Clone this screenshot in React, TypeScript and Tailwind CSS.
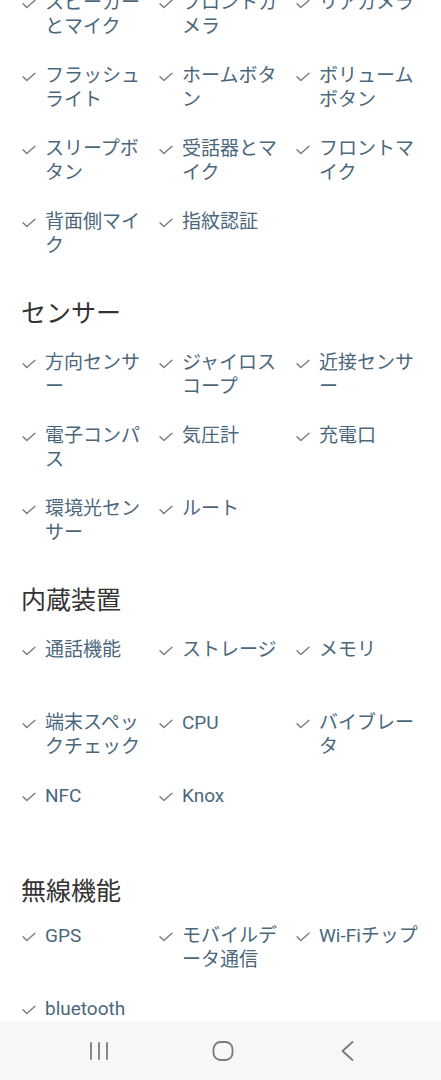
import React from "react";

const Check = () => (
  <svg width="14" height="10" viewBox="0 0 14 10" fill="none" className="mt-[8px] ml-[1px]">
    <path d="M1 4.8 L4.8 8.6 L13 1.2" stroke="#767d84" strokeWidth="1.4" strokeLinecap="round" strokeLinejoin="round" />
  </svg>
);

const Item = ({ t }: { t: string }) => (
  <div className="flex min-h-[48px]">
    <div className="w-[24px] shrink-0">
      <Check />
    </div>
    <div className="w-[104px] text-[19px] leading-[24px] text-[#4b677c] [line-break:anywhere]">{t}</div>
  </div>
);

const Grid = ({ items, className = "" }: { items: string[]; className?: string }) => (
  <div className={"grid grid-cols-[137px_137px_137px] gap-y-[25px] pl-[21px] " + className}>
    {items.map((t) => (
      <Item key={t} t={t} />
    ))}
  </div>
);

const Heading = ({ children, className = "" }: { children: React.ReactNode; className?: string }) => (
  <h2 className={"pl-[21px] text-[25px] leading-[32px] text-[#333333] font-normal " + className}>{children}</h2>
);

export default function App() {
  return (
    <div className="relative h-[1080px] w-[441px] overflow-hidden bg-white font-[Roboto,'Noto_Sans_CJK_JP',sans-serif]">
      <div className="mt-[-9px]">
        <Grid
          items={[
            "スピーカーとマイク",
            "フロントカメラ",
            "リアカメラ",
            "フラッシュライト",
            "ホームボタン",
            "ボリュームボタン",
            "スリープボタン",
            "受話器とマイク",
            "フロントマイク",
            "背面側マイク",
            "指紋認証",
          ]}
        />
        <Heading className="mt-[40px]">センサー</Heading>
        <Grid
          className="mt-[21px]"
          items={["方向センサー", "ジャイロスコープ", "近接センサー", "電子コンパス", "気圧計", "充電口", "環境光センサー", "ルート"]}
        />
        <Heading className="mt-[40px]">内蔵装置</Heading>
        <Grid
          className="mt-[21px]"
          items={["通話機能", "ストレージ", "メモリ", "端末スペックチェック", "CPU", "バイブレータ", "NFC", "Knox"]}
        />
        <Heading className="mt-[44px]">無線機能</Heading>
        <Grid className="mt-[16px]" items={["GPS", "モバイルデータ通信", "Wi-Fiチップ", "bluetooth"]} />
      </div>

      <div className="fixed bottom-0 left-0 flex h-[59px] w-[441px] items-center justify-center bg-[#f7f7f7] pl-[5px]">
        <div className="flex w-[124px] justify-center">
          <svg width="20" height="18" viewBox="0 0 20 18" fill="none">
            <path d="M2 1 V17 M10 1 V17 M18 1 V17" stroke="#7a7a7a" strokeWidth="1.8" strokeLinecap="round" />
          </svg>
        </div>
        <div className="flex w-[124px] justify-center">
          <svg width="22" height="20" viewBox="0 0 22 20" fill="none">
            <rect x="1.5" y="1" width="19" height="18" rx="7" stroke="#7a7a7a" strokeWidth="1.8" />
          </svg>
        </div>
        <div className="flex w-[124px] justify-center">
          <svg width="13" height="20" viewBox="0 0 13 20" fill="none">
            <path d="M11.5 1 L1.5 10 L11.5 19" stroke="#7a7a7a" strokeWidth="1.8" strokeLinecap="round" strokeLinejoin="round" />
          </svg>
        </div>
      </div>
    </div>
  );
}
